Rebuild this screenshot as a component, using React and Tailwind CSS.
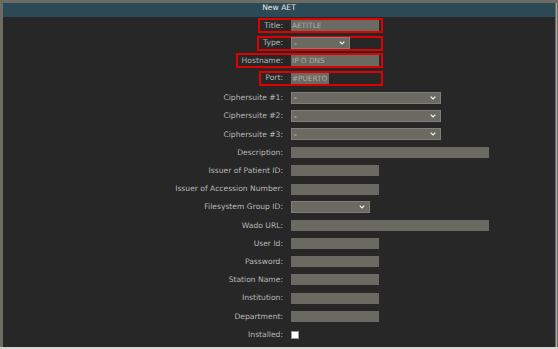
const fields = [
    { label: "Title:", kind: "text", w: 88, ph: "AETITLE", red: true },
    { label: "Type:", kind: "select", w: 59, red: true },
    { label: "Hostname:", kind: "text", w: 88, ph: "IP O DNS", red: true },
    { label: "Port:", kind: "text", w: 38, ph: "#PUERTO", red: true },
    { label: "Ciphersuite #1:", kind: "select", w: 150 },
    { label: "Ciphersuite #2:", kind: "select", w: 150 },
    { label: "Ciphersuite #3:", kind: "select", w: 150 },
    { label: "Description:", kind: "text", w: 198 },
    { label: "Issuer of Patient ID:", kind: "text", w: 88 },
    { label: "Issuer of Accession Number:", kind: "text", w: 88 },
    { label: "Filesystem Group ID:", kind: "select", w: 79, empty: true },
    { label: "Wado URL:", kind: "text", w: 198 },
    { label: "User Id:", kind: "text", w: 88 },
    { label: "Password:", kind: "text", w: 88 },
    { label: "Station Name:", kind: "text", w: 88 },
    { label: "Institution:", kind: "text", w: 88 },
    { label: "Department:", kind: "text", w: 88 },
    { label: "Installed:", kind: "check" },
    { label: "", kind: "check", id: "next" },
];

const Chevron = () => (
    <svg width="6" height="4" viewBox="0 0 6 4" className="shrink-0">
        <polyline points="0.7,0.7 3,3 5.3,0.7" fill="none" stroke="#f2f2f2" strokeWidth="1.2" />
    </svg>
);

const Control = ({ f }) => {
    if (f.kind === "text") {
        return (
            <input
                type="text"
                readOnly
                placeholder={f.ph || ""}
                style={{ width: f.w }}
                className="h-[11px] p-0 pl-[1px] bg-[#6b6a62] text-[7.3px] leading-none text-[#d8d8d8] placeholder:text-[#aeada5] outline-none border-0 font-['DejaVu_Sans',sans-serif]"
            />
        );
    }
    if (f.kind === "select") {
        return (
            <div
                style={{ width: f.w }}
                className="h-[12px] flex items-center justify-between pl-[2px] pr-[4px] bg-[#6b6a62] border border-[#807f78] text-[7.3px] leading-none text-[#ececec]"
            >
                <span>{f.empty ? "" : "-"}</span>
                <Chevron />
            </div>
        );
    }
    return <span className="block w-[8px] h-[8px] bg-white border border-[#9a9a9a]" />;
};

const Row = ({ f }) => {
    if (f.red) {
        return (
            <div className="flex items-center h-[17.5px]">
                <div className="w-[288px] flex justify-end">
                    <span className="h-[15px] flex items-center pl-[4px] pr-[8px] border-y-2 border-l-2 border-[#e10000] text-[#b8b8b8]">
                        {f.label}
                    </span>
                </div>
                <div className="w-[92px] h-[15px] flex items-center border-y-2 border-r-2 border-[#e10000]">
                    <Control f={f} />
                </div>
            </div>
        );
    }
    return (
        <div className="flex items-center h-[18.2px]">
            <div className="w-[288px] pr-[8px] text-right text-[#b8b8b8]">{f.label}</div>
            <Control f={f} />
        </div>
    );
};

export default function App() {
    return (
        <div className="w-[558px] h-[349px] bg-[#6c6c64] flex flex-col overflow-hidden font-['DejaVu_Sans',sans-serif] text-[7.6px] leading-none">
            <div className="flex flex-1 min-h-0 pt-[3px] pl-[3px]">
                <div className="w-[552px] h-full flex flex-col bg-[#272727] overflow-hidden">
                    <div className="h-[14px] shrink-0 bg-[#2b4a55] text-center text-[#e8e8e8] leading-[9px]">New AET</div>
                    <div className="flex flex-col">
                        {fields.slice(0, 4).map((f) => <Row key={f.label} f={f} />)}
                        <div className="h-[2px]" />
                        {fields.slice(4).map((f) => <Row key={f.id || f.label} f={f} />)}
                    </div>
                </div>
                <div className="w-[1px] bg-[#6c6c64]" />
                <div className="w-[1px] bg-[#a9a9a2]" />
                <div className="flex-1 bg-[#6c6c64]" />
            </div>
            <div className="h-[2px] shrink-0 bg-[#d4d4d0]" />
        </div>
    );
}
